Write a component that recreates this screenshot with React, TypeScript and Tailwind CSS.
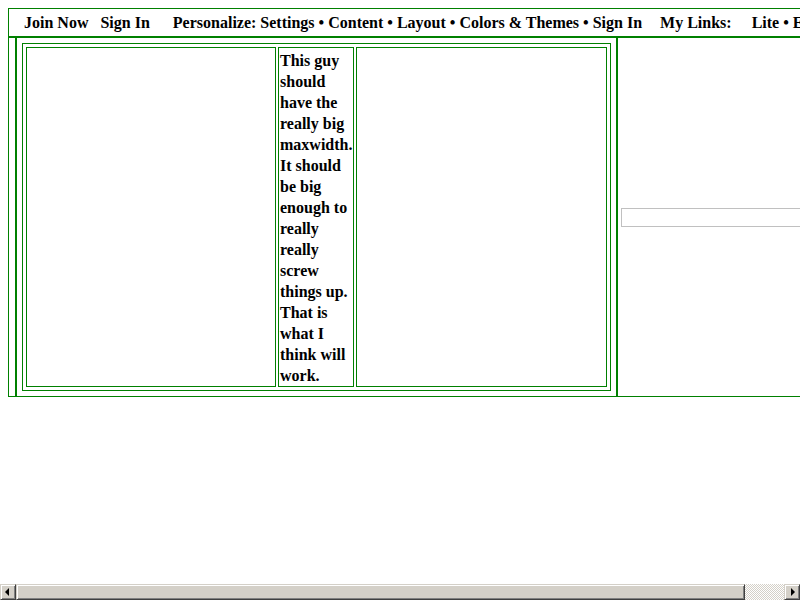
import React from 'react';

const serif = { fontFamily: '"Liberation Serif", "Times New Roman", serif' };

function ScrollButton({ dir }: { dir: 'left' | 'right' }) {
  return (
    <div className="w-[16px] h-[16px] shrink-0 bg-[#d4d0c8] border-t border-l border-t-[#d4d0c8] border-l-[#d4d0c8] border-b border-r border-b-[#404040] border-r-[#404040] shadow-[inset_1px_1px_0_#ffffff,inset_-1px_-1px_0_#808080] flex items-center justify-center">
      <svg width="8" height="8" viewBox="0 0 8 8">
        {dir === 'left' ? <path d="M5 0 L1 4 L5 8 Z" fill="#000" /> : <path d="M3 0 L7 4 L3 8 Z" fill="#000" />}
      </svg>
    </div>
  );
}

export default function App() {
  const text =
    'This guy should have the really big maxwidth. It should be big enough to really really screw things up. That is what I think will work.';

  return (
    <div className="w-[800px] h-[600px] flex flex-col bg-white overflow-hidden text-black" style={serif}>
      <div className="flex-1 overflow-hidden pt-[8px] pl-[8px]">
        <div className="w-[1100px] border border-[#008000]">
          {/* header row */}
          <div className="h-[29px] border-b-2 border-[#008000] flex items-center text-[16px] font-bold whitespace-nowrap pl-[15px] pt-[1px]">
            <span>Join Now</span>
            <span className="ml-[12px]">Sign In</span>
            <span className="ml-[23px]">Personalize: Settings • Content • Layout • Colors &amp; Themes • Sign In</span>
            <span className="ml-[18px]">My Links:</span>
            <span className="ml-[20px]">Lite • Edit</span>
          </div>

          {/* body row */}
          <div className="flex h-[358px]">
            <div className="w-[6px] shrink-0" />
            <div className="shrink-0 border-x-2 border-[#008000] p-[5px]">
              <div className="w-[589px] h-[348px] border border-[#008000] p-[3px] flex gap-[2px]">
                <div className="w-[250px] border border-[#008000]" />
                <div className="w-[76px] border border-[#008000] px-[1px] pt-[2px] text-[16px] leading-[21px] font-bold">
                  {text}
                </div>
                <div className="w-[251px] border border-[#008000]" />
              </div>
            </div>
            <div className="flex-1 flex items-center pl-[3px] pt-[1px]">
              <input className="w-[400px] h-[19px] border border-[#c0c0c0] outline-none" />
            </div>
          </div>
        </div>
      </div>

      {/* horizontal scrollbar */}
      <div className="h-[16px] flex">
        <ScrollButton dir="left" />
        <div className="w-[729px] h-[16px] bg-[#d4d0c8] border-t border-l border-t-[#d4d0c8] border-l-[#d4d0c8] border-b border-r border-b-[#404040] border-r-[#404040] shadow-[inset_1px_1px_0_#ffffff,inset_-1px_-1px_0_#808080]" />
        <div className="flex-1 h-[16px] bg-[repeating-conic-gradient(#d4d0c8_0_25%,#ffffff_0_50%)] bg-[length:2px_2px]" />
        <ScrollButton dir="right" />
      </div>
    </div>
  );
}
